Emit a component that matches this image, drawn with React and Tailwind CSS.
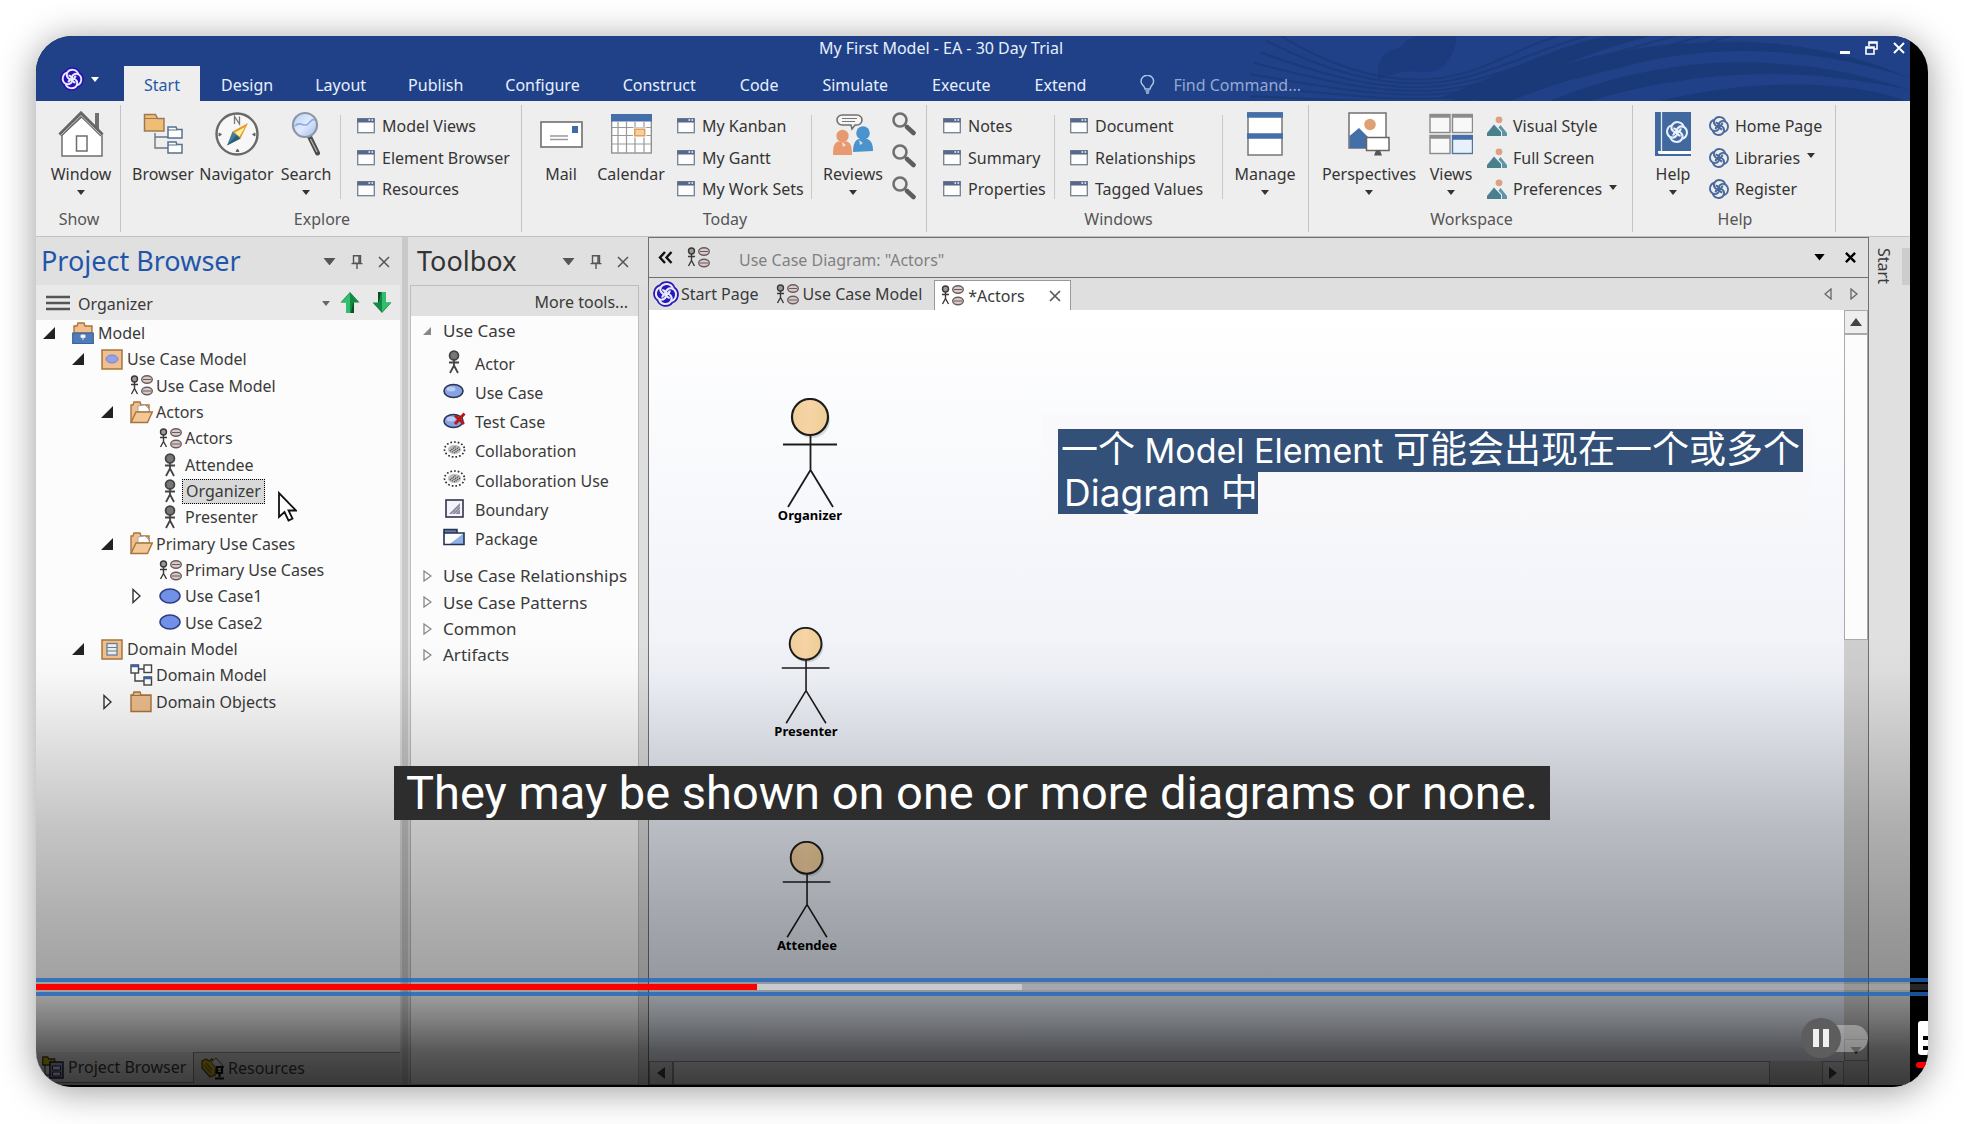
import React from "react";

/* ---------- shared glyphs ---------- */

function Knot({ size = 22, line = "#4b6ea0", halo = null, width = 2 }) {
  const rim = "M19.5 6.5A7.2 7.2 0 0117.5 19.5A7.2 7.2 0 014.500 17.500A7.2 7.2 0 016.500 4.500A7.2 7.2 0 0119.500 6.500z";
  return (
    <svg
      width={size}
      height={size}
      viewBox={halo ? "-2 -2 28 28" : "0 0 24 24"}
      fill="none"
      aria-hidden="true"
      className="shrink-0"
    >
      {halo && <path d={rim} fill={halo} stroke={halo} strokeWidth="6" strokeLinejoin="round" />}
      <path d={rim} stroke={line} strokeWidth={width} strokeLinejoin="round" />
      {[0, 90, 180, 270].map((t) => (
        <path
          key={t}
          d="M12 12C11 8 15 4.500 19.500 6.500M12 12C14.500 11.500 16 10 16.200 8"
          stroke={line}
          strokeWidth={width}
          transform={`rotate(${t} 12 12)`}
        />
      ))}
    </svg>
  );
}

function Caret({ size = 8, color = "#333" }) {
  return (
    <svg width={size} height={size / 2 + 1} viewBox="0 0 8 5" aria-hidden="true" className="shrink-0">
      <path d="M0 0h8L4 5z" fill={color} />
    </svg>
  );
}

function Cross({ size = 12, color = "#444", width = 2 }) {
  return (
    <svg width={size} height={size} viewBox="0 0 12 12" aria-hidden="true">
      <path d="M1 1l10 10M11 1L1 11" stroke={color} strokeWidth={width} />
    </svg>
  );
}

function Pin() {
  return (
    <svg width="12" height="14" viewBox="0 0 12 14" fill="none" stroke="#555" strokeWidth="1.4" aria-hidden="true">
      <path d="M2.5 .8h7v7.4h-7zM8 1v7M.5 8.6h11M6 9v5" />
    </svg>
  );
}

/* ---------- ribbon icons ---------- */

const PanelIcon = () => (
  <svg width="18" height="16" viewBox="0 0 18 16">
    <rect x=".7" y=".7" width="16.6" height="14" fill="#fdfdfe" stroke="#75818f" strokeWidth="1.3" />
    <rect x=".5" y=".5" width="17" height="4" fill="#56698c" />
    <path d="M11.5 2h1.6M14.5 2h1.6" stroke="#fff" strokeWidth="1.4" />
  </svg>
);

const SceneIcon = () => (
  <svg width="20" height="20" viewBox="0 0 20 20">
    <circle cx="12" cy="3.8" r="3.4" fill="#dca083" />
    <path d="M0 20v-3l7-8.5L14 16v4z" fill="#48808f" />
    <path d="M11.5 11.5l2-2.5L20 17v3h-5v-4.5z" fill="#5d97a5" />
  </svg>
);

const HelpKnot = () => <Knot size={20} line="#4a699b" width={2.2} />;

const HomeIcon = () => (
  <svg width="46" height="46" viewBox="0 0 46 46">
    <path d="M37 2h4v18l-4-4z" fill="#707070" />
    <path d="M4 24v21h40V24L23.500 6z" fill="#fff" stroke="#6e6e6e" strokeWidth="1.500" />
    <path d="M2 24L23 3l21 21" fill="none" stroke="#666" strokeWidth="4.500" />
    <path d="M2.500 24.500L23 4.500l20.500 20" fill="none" stroke="#c8c8c8" strokeWidth="1" />
    <rect x="18.500" y="25" width="10.500" height="15" fill="#fff" stroke="#6e6e6e" strokeWidth="1.500" />
  </svg>
);

const BrowserIcon = () => (
  <svg width="40" height="42" viewBox="0 0 40 42">
    <path d="M12 20v15h13M12 24h13" fill="none" stroke="#6b7680" strokeWidth="1.400" />
    <path d="M1.500 18V1.500h11l2 4h6.500V18z" fill="#f0bd74" stroke="#9a7b56" strokeWidth="1.500" />
    <path d="M1.500 5.500h13" stroke="#9a7b56" strokeWidth="1.200" />
    <path d="M25 25V14h8l1 2.500h5V25zM25 40V29h8l1 2.500h5V40z" fill="#fff" stroke="#56708f" strokeWidth="1.500" />
    <path d="M25 17h9M25 32h9" stroke="#56708f" strokeWidth="1.200" />
  </svg>
);

const CompassIcon = () => (
  <svg width="44" height="44" viewBox="0 0 44 44">
    <circle cx="22" cy="22" r="20.500" fill="#f7f7f7" stroke="#696969" strokeWidth="2.400" />
    <path d="M19.500 12V4.500l5 7.500V4.500" fill="none" stroke="#777" strokeWidth="1.300" />
    <path d="M4 21l2.500 1.500L4 24zM40 21l-2.500 1.500L40 24zM21 39.500l1.500-2.500 1.500 2.500z" fill="#666" stroke="#666" />
    <path d="M33 11L25.500 26.500 17.500 19.500z" fill="#e89a26" />
    <path d="M30 15l-5.500 9.500-4.500-4z" fill="#fff3a0" />
    <path d="M12 33.500l5.500-14 8 7z" fill="#3f7e97" />
    <path d="M12 33.500l9.500-10.500 4 3.500z" fill="#2d5f74" />
  </svg>
);

const LensIcon = () => (
  <svg width="30" height="46" viewBox="0 0 30 46">
    <defs>
      <linearGradient id="lens" x1="0" y1="0" x2="1" y2="1">
        <stop offset="0" stopColor="#b9cdf0" />
        <stop offset=".5" stopColor="#dfeaff" />
        <stop offset="1" stopColor="#a3bbe6" />
      </linearGradient>
    </defs>
    <path d="M18.500 25.500L26.500 42" stroke="#4c4c4c" strokeWidth="5" strokeLinecap="round" />
    <path d="M19.500 28L26 41" stroke="#b5b5b5" strokeWidth="1.300" />
    <circle cx="14" cy="14" r="12" fill="url(#lens)" stroke="#8d95a6" strokeWidth="2.200" />
    <path d="M4 15c5-6 9 2 13-2s4-5 7-4" stroke="#8ea9dc" strokeWidth="1.600" fill="none" />
  </svg>
);

const MailIcon = () => (
  <svg width="43" height="27" viewBox="0 0 43 27">
    <rect x="1" y="1" width="41" height="25" fill="#fff" stroke="#777" strokeWidth="1.700" />
    <rect x="32" y="5" width="6" height="7" fill="#3f6ca6" />
    <path d="M10 15h18M10 18.500h18" stroke="#9a9a9a" strokeWidth="1.300" />
  </svg>
);

const CalendarIcon = () => (
  <svg width="41" height="40" viewBox="0 0 41 40">
    <rect x=".7" y="1" width="39.600" height="38" fill="#fff" stroke="#8a8a8a" strokeWidth="1.300" />
    <rect width="41" height="7.500" fill="#446ea9" />
    <path d="M7 8v31M15.500 8v31M24 8v31M33 8v31M1 13.500h39M1 21.500h39M1 30h39" stroke="#999" strokeWidth="1.200" />
    <rect x="22" y="13.500" width="13.500" height="10" fill="#fff" />
    <rect x="23.700" y="15.200" width="10" height="6.600" fill="#f6cfa0" stroke="#dd9c55" strokeWidth="1.400" />
  </svg>
);

const ReviewsIcon = () => (
  <svg width="40" height="42" viewBox="0 0 40 42">
    <path d="M9 2h15a5 5 0 010 10h-2l-3 4-1-4H9A5 5 0 019 2z" fill="#f5f5f5" stroke="#707070" strokeWidth="1.600" />
    <path d="M9 5.500h15M9 8.500h13" stroke="#777" strokeWidth="1.200" />
    <circle cx="30" cy="20" r="6.800" fill="#4b93cc" />
    <path d="M20 39c0-8 2-12 6-13h8c4 1 6 5 6 12z" fill="#4b93cc" />
    <circle cx="9.500" cy="23" r="6.500" fill="#e79a70" stroke="#eee" strokeWidth=".6" />
    <path d="M0 42c0-8 1-12 5-13.500h9c4 1.500 5 5.500 5 13.500z" fill="#e79a70" />
    <path d="M9 29l4 3-3 2zM26 27l4 3-3 2z" fill="#fff" opacity=".7" />
  </svg>
);

const MagnifierIcon = () => (
  <svg width="24" height="24" viewBox="0 0 24 24">
    <circle cx="8" cy="8" r="6.500" fill="none" stroke="#707070" strokeWidth="2.600" />
    <path d="M12.500 12.500l3 3" stroke="#707070" strokeWidth="2" />
    <path d="M15 15l6.500 6" stroke="#5e5e5e" strokeWidth="4.500" strokeLinecap="round" />
  </svg>
);

const ManageIcon = () => (
  <svg width="36" height="44" viewBox="0 0 36 44">
    <rect x="1" y="1" width="34" height="42" fill="#fff" stroke="#777" strokeWidth="1.500" />
    <path d="M0 3h36M0 24h36" stroke="#446fa8" strokeWidth="5.500" />
  </svg>
);

const PerspectivesIcon = () => (
  <svg width="42" height="44" viewBox="0 0 42 44">
    <rect x="1" y="1" width="37" height="35" fill="#fff" stroke="#707070" strokeWidth="1.500" />
    <circle cx="22" cy="12.500" r="5.800" fill="#e0a076" />
    <path d="M1.500 36V24L11 16l12 12v8z" fill="#446fa8" />
    <rect x="18.500" y="25.500" width="22.500" height="13" fill="#fff" stroke="#666" strokeWidth="1.500" />
    <path d="M26 43.500l2-5h4l2 5z" fill="#555" />
  </svg>
);

const ViewsIcon = () => (
  <svg width="44" height="42" viewBox="0 0 44 42">
    <g fill="#f8f8f8" stroke="#8a8a8a" strokeWidth="1.400">
      <rect x="1" y="1.500" width="20" height="18" />
      <rect x="23.500" y="1.500" width="20" height="18" />
      <rect x="1" y="22.500" width="20" height="18" />
    </g>
    <path d="M1 3h20M23.500 3h20M1 24h20" stroke="#8c8c8c" strokeWidth="3.500" />
    <rect x="23.500" y="22.500" width="20" height="18" fill="#e8f0fb" stroke="#55759f" strokeWidth="1.400" />
    <path d="M23 24.500h21" stroke="#446fa8" strokeWidth="4.500" />
  </svg>
);

const HelpBookIcon = () => (
  <span className="relative block h-11 w-9">
    <svg width="36" height="44" viewBox="0 0 36 44">
      <rect width="36" height="44" fill="#41699f" />
      <path d="M6.500 0v40" stroke="#dfe7f2" strokeWidth="1.300" />
      <path d="M3 40.500h33" stroke="#fff" strokeWidth="3" />
      <path d="M3 41v3" stroke="#41699f" />
    </svg>
    <span className="absolute left-[11px] top-[9px]">
      <Knot size={22} line="#e9f1ff" width={2.2} />
    </span>
  </span>
);

/* ---------- tree and toolbox icons ---------- */

const DiagramIcon = () => (
  <svg width="23" height="21" viewBox="0 0 23 21" fill="none" stroke="#3d3838" strokeWidth="1.400">
    <circle cx="4.500" cy="4" r="3" fill="#999" />
    <path d="M4.500 7v7M1 9.500h7M4.500 13.500L1.500 19M4.500 13.500L7.500 19" />
    <g fill="#d9caca" stroke="#6a5c5c">
      <ellipse cx="17" cy="4.500" rx="5.300" ry="3.700" />
      <ellipse cx="17" cy="16" rx="5.300" ry="3.700" />
      <path d="M13 4.500h8M13 16h8" strokeWidth="1" />
    </g>
  </svg>
);

const ActorIcon = () => (
  <svg width="14" height="24" viewBox="0 0 14 24" fill="none" stroke="#444" strokeWidth="1.800">
    <circle cx="7" cy="5.500" r="4.400" fill="#777" />
    <path d="M7 10v6M2 12.500h10M7 15.500L3 23M7 15.500l4 7.500" />
  </svg>
);

const OvalIcon = () => (
  <svg width="22" height="17" viewBox="0 0 22 17">
    <ellipse cx="11" cy="8" rx="10" ry="7" fill="#7190e8" stroke="#2f3f80" strokeWidth="1.500" />
  </svg>
);

const RootIcon = () => (
  <svg width="22" height="23" viewBox="0 0 22 23">
    <path d="M2 11V4h3l1-3h6l1 3h7v7z" fill="#f0bf8b" stroke="#a8743c" strokeWidth="1.400" />
    <path d="M.7 11h20.600v10.500H.7z" fill="#4f7cb8" stroke="#3a62a0" strokeWidth="1.200" />
    <path d="M9 13h4v2.500H9zM10 17h2" fill="#fff" stroke="#dfe9f7" strokeWidth="1" />
  </svg>
);

const PackageUseIcon = () => (
  <svg width="22" height="21" viewBox="0 0 22 21">
    <rect x="1" y="1" width="20" height="19" fill="#efc08f" stroke="#a8743c" strokeWidth="1.500" />
    <ellipse cx="11" cy="10" rx="6" ry="4" fill="#94a0e8" stroke="#7a80d0" />
  </svg>
);

const PackageClassIcon = () => (
  <svg width="22" height="21" viewBox="0 0 22 21">
    <rect x="1" y="1" width="20" height="19" fill="#efc08f" stroke="#a8743c" strokeWidth="1.500" />
    <rect x="6" y="4.500" width="10" height="11.500" fill="#e8eef4" stroke="#6c7f92" strokeWidth="1.300" />
    <path d="M6 8.500h10M6 12h10" stroke="#6c7f92" strokeWidth="1.200" />
  </svg>
);

const OpenFolderIcon = () => (
  <svg width="23" height="23" viewBox="0 0 23 23">
    <path d="M1 21.500V4h2l1-3h6l1 3h8v8" fill="#efc08f" stroke="#a8743c" strokeWidth="1.400" />
    <path d="M8 11V5l7-1 4 4v3z" fill="#fff" stroke="#999" strokeWidth=".8" />
    <path d="M1 21.500L6 11h16.300L17.500 21.500z" fill="#f3c796" stroke="#a8743c" strokeWidth="1.400" />
  </svg>
);

const FolderIcon = () => (
  <svg width="22" height="22" viewBox="0 0 22 22">
    <path d="M1 20.500V4h2l1-3h6l1 3h10v16.500z" fill="#ecbe8e" stroke="#a8743c" strokeWidth="1.400" />
    <path d="M1 4.500h20" stroke="#a8743c" />
  </svg>
);

const ClassDiagramIcon = () => (
  <svg width="23" height="22" viewBox="0 0 23 22" fill="#fff" stroke="#444" strokeWidth="1.400">
    <path d="M9 5h5M5 9v8h9" fill="none" />
    <rect x="1" y="1" width="7.500" height="8" />
    <rect x="14" y="1" width="7.500" height="7.500" />
    <rect x="14" y="13" width="7.500" height="8" />
    <path d="M1 2h7.500M14 14h7.500" stroke="#3b62b8" strokeWidth="2.400" />
  </svg>
);

const ToolOval = ({ failed }) => (
  <svg width="23" height="17" viewBox="0 0 23 17">
    <ellipse cx="10.500" cy="9" rx="9.500" ry="6.500" fill="#87a4e2" stroke="#2c3554" strokeWidth="1.600" />
    <ellipse cx="8" cy="7" rx="4.500" ry="2.500" fill="#b9cdf6" />
    {failed && <path d="M12 3.500l9 8.500M21.500 1.500l-9.500 10.500" stroke="#bb1515" strokeWidth="2.800" />}
  </svg>
);

const CollabIcon = () => (
  <svg width="23" height="19" viewBox="0 0 23 19">
    <ellipse cx="11.500" cy="9.500" rx="10" ry="7.500" fill="none" stroke="#333" strokeWidth="1.700" strokeDasharray="1.700 2" />
    <ellipse cx="11.500" cy="9.500" rx="6.500" ry="4.500" fill="#bdbdbd" />
    <path d="M9 12l7-5M11 13l6-4M7 11l6-5" stroke="#444" strokeWidth="1.300" strokeDasharray="1 1" />
  </svg>
);

const BoundaryIcon = () => (
  <svg width="19" height="19" viewBox="0 0 19 19">
    <rect x="1" y="1" width="17" height="17" fill="#f4f4fa" stroke="#33334a" strokeWidth="1.600" />
    <path d="M4 15L15 4v11z" fill="#8e8ea0" />
    <path d="M7 15l8-8M10 15l5-5" stroke="#ddd" strokeDasharray="1 1" />
  </svg>
);

const ToolPackageIcon = () => (
  <svg width="22" height="18" viewBox="0 0 22 18">
    <path d="M1 5V1.500h13V5" fill="#5f78ad" stroke="#253250" strokeWidth="1.500" />
    <path d="M1 5h20v11.500H1z" fill="#fff" />
    <path d="M21 5v11.500H6z" fill="#8fb2e8" />
    <path d="M1 5h20v11.500H1z" fill="none" stroke="#253250" strokeWidth="1.600" />
  </svg>
);

/* ---------- ribbon ---------- */

function Big({ icon, label, width, menu }) {
  return (
    <button type="button" className={`${width} flex shrink-0 flex-col items-center pt-[5px] whitespace-nowrap`}>
      <span className="flex h-12 items-center justify-center">{icon}</span>
      <span className="mt-1 leading-6">{label}</span>
      {menu && (
        <span className="flex h-3 items-center">
          <Caret />
        </span>
      )}
    </button>
  );
}

function Stack({ items, Icon = PanelIcon, width = "" }) {
  return (
    <div className={`${width} flex shrink-0 flex-col pt-[5px]`}>
      {items.map(([label, menu]) => (
        <button key={label} type="button" className="flex h-8 items-center gap-1.5 text-left whitespace-nowrap">
          <span className="flex w-5 shrink-0 justify-center">
            <Icon />
          </span>
          <span>{label}</span>
          {menu && (
            <span className="ml-px pb-1">
              <Caret />
            </span>
          )}
        </button>
      ))}
    </div>
  );
}

const Rule = () => <div className="mt-[10px] h-[84px] w-px shrink-0 bg-[#c9c9c9]" />;

function Group({ label, width, children }) {
  return (
    <section aria-label={label} className={`${width} flex shrink-0 flex-col border-r border-[#c4c4c4]`}>
      <div className="flex h-[100px]">{children}</div>
      <div className="h-[27px] pt-px pl-0.5 text-center leading-[27px] text-[#555]">{label}</div>
    </section>
  );
}

function Ribbon() {
  return (
    <div className="flex overflow-hidden border-b border-[#c2c2c2] bg-[#eeeeee] py-1 text-base text-[#353535]">
      <Group label="Show" width="w-[85px]">
        <Big width="ml-2 w-[74px]" icon={<HomeIcon />} label="Window" menu />
      </Group>
      <Group label="Explore" width="w-[401px]">
        <Big width="ml-[5px] w-[74px]" icon={<BrowserIcon />} label="Browser" />
        <Big width="w-[73px]" icon={<CompassIcon />} label="Navigator" />
        <Big width="w-[66px]" icon={<LensIcon />} label="Search" menu />
        <div className="w-px shrink-0" />
        <Rule />
        <Stack width="ml-[15px]" items={[["Model Views"], ["Element Browser"], ["Resources"]]} />
      </Group>
      <Group label="Today" width="w-[405px]">
        <Big width="ml-1.5 w-[66px]" icon={<MailIcon />} label="Mail" />
        <Big width="w-[74px]" icon={<CalendarIcon />} label="Calendar" />
        <Stack width="ml-2 w-[135px]" items={[["My Kanban"], ["My Gantt"], ["My Work Sets"]]} />
        <Rule />
        <Big width="ml-1 w-[74px]" icon={<ReviewsIcon />} label="Reviews" menu />
        <div className="flex flex-col pt-[3px]">
          {["Find in diagram", "Find in model", "Find in files"].map((n) => (
            <button key={n} type="button" aria-label={n} className="flex h-8 w-7 items-center justify-center">
              <MagnifierIcon />
            </button>
          ))}
        </div>
      </Group>
      <Group label="Windows" width="w-[382px]">
        <Stack width="ml-[15px] w-[112px]" items={[["Notes"], ["Summary"], ["Properties"]]} />
        <Rule />
        <Stack width="ml-[14px] w-[153px]" items={[["Document"], ["Relationships"], ["Tagged Values"]]} />
        <Rule />
        <Big width="ml-[5px] w-[74px]" icon={<ManageIcon />} label="Manage" menu />
      </Group>
      <Group label="Workspace" width="w-[324px]">
        <Big width="ml-[9px] w-[102px]" icon={<PerspectivesIcon />} label="Perspectives" menu />
        <Big width="ml-1 w-[54px]" icon={<ViewsIcon />} label="Views" menu />
        <Stack width="ml-[9px]" Icon={SceneIcon} items={[["Visual Style"], ["Full Screen"], ["Preferences", true]]} />
      </Group>
      <Group label="Help" width="w-[203px]">
        <Big width="ml-[14px] w-[52px]" icon={<HelpBookIcon />} label="Help" menu />
        <Stack width="ml-[10px]" Icon={HelpKnot} items={[["Home Page"], ["Libraries", true], ["Register"]]} />
      </Group>
    </div>
  );
}

function TitleWaves() {
  const rising = [0, 1, 2, 3, 4, 5, 6];
  return (
    <svg
      className="absolute right-0 top-0 h-full w-[660px]"
      viewBox="0 0 660 65"
      preserveAspectRatio="none"
      fill="none"
      aria-hidden="true"
    >
      <path d="M128 44C126 24 134 14 150 12C156 2 170 -4 196 -4H206C208 16 196 40 168 36C150 34 140 40 128 44z" fill="#1c3b7e" />
      {rising.map((i) => (
        <path
          key={i}
          d={`M${22 - i * 6} ${-6 + i * 11}C70 ${26 + i * 6} 130 ${50 + i * 3} 190 ${42 + i * 4}S${280 + i * 22} ${-2 + i * 4} ${350 + i * 26} -8`}
          stroke="#193774"
          strokeWidth="2"
          opacity=".7"
        />
      ))}
      <g fill="#1a3979">
        <path d="M225 65C310 20 400 4 500 6C560 8 620 24 660 42C610 26 560 16 500 15C420 14 340 34 260 65z" />
        <path d="M300 65C380 32 460 22 530 28C580 30 630 44 660 54C610 44 570 38 520 38C450 38 390 50 340 65z" />
        <path d="M410 65C470 50 530 46 580 50C610 52 640 58 655 65z" />
        <path d="M190 62C270 30 320 4 370 -2H410C350 10 290 40 220 65z" />
      </g>
    </svg>
  );
}

const MENU = [
  ["Design", "px-[21px]"],
  ["Layout", "px-[21px]"],
  ["Publish", "px-[21px]"],
  ["Configure", "px-[21px]"],
  ["Construct", "px-[22px]"],
  ["Code", "px-[22px]"],
  ["Simulate", "px-[22px]"],
  ["Execute", "px-[22px]"],
  ["Extend", "px-[22px]"],
];

function TitleBar() {
  return (
    <header className="relative h-[65px] shrink-0 overflow-hidden bg-[#204187] text-base text-[#e6f0ff]">
      <TitleWaves />
      <div className="relative flex h-6 items-center">
        <h1 className="flex-1 pl-3 text-center">My First Model - EA - 30 Day Trial</h1>
        <div className="flex w-[76px] items-center gap-[15px] pl-1.5">
          <button type="button" aria-label="Minimize" className="flex h-3 w-[10px] items-end">
            <span className="h-[3px] w-full bg-white" />
          </button>
          <button type="button" aria-label="Restore">
            <svg width="13" height="14" viewBox="0 0 13 14" fill="none" stroke="#fff" strokeWidth="1.600">
              <path d="M4 5V1h8v7H9M4 2h8" />
              <path d="M1 6h8v7H1zM1 7h8" />
            </svg>
          </button>
          <button type="button" aria-label="Close">
            <Cross size={12} color="#fff" width={2} />
          </button>
        </div>
      </div>
      <nav className="relative flex h-[41px] items-end">
        <button type="button" aria-label="Application menu" className="flex h-10 w-[88px] items-center gap-[7px] pb-1 pl-6">
          <Knot size={24} line="#e8ecff" halo="#2a10b8" width={2.2} />
          <Caret color="#fff" />
        </button>
        <button type="button" className="h-[35px] w-[76px] bg-[#eeeeee] pt-0.5 text-center leading-8 text-[#1e5aa8]">
          Start
        </button>
        {MENU.map(([name, pad]) => (
          <button key={name} type="button" className={`${pad} h-[35px] pt-0.5 leading-8`}>
            {name}
          </button>
        ))}
        <label className="ml-8 flex h-[35px] items-center gap-[18px] pt-0.5">
          <svg width="15" height="19" viewBox="0 0 15 19" fill="none" stroke="#a9c3e6" strokeWidth="1.500">
            <path d="M5 14c0-3-4-4-4-7.500a6.300 6.300 0 0112.600 0C13.600 10 10 11 10 14zM5.500 16h4M6 18h3" />
          </svg>
          <input
            aria-label="Find Command"
            placeholder="Find Command..."
            className="w-[150px] bg-transparent leading-8 outline-none placeholder:text-[#93a9d2]"
          />
        </label>
      </nav>
    </header>
  );
}

/* ---------- dock panels ---------- */

function PanelHead({ title, tone }) {
  return (
    <div className={`${tone} flex h-12 shrink-0 items-center bg-[#e0e0e0]`}>
      <h2 className="flex-1 text-[27px] leading-10 whitespace-nowrap">{title}</h2>
      <div className="flex items-center gap-[15px] pt-px">
        <button type="button" aria-label={`${title} menu`}>
          <Caret size={13} color="#555" />
        </button>
        <button type="button" aria-label={`Pin ${title}`}>
          <Pin />
        </button>
        <button type="button" aria-label={`Close ${title}`}>
          <Cross size={12} color="#555" width={1.5} />
        </button>
      </div>
    </div>
  );
}

const TREE = [
  [0, "open", RootIcon, "Model"],
  [1, "open", PackageUseIcon, "Use Case Model"],
  [2, null, DiagramIcon, "Use Case Model"],
  [2, "open", OpenFolderIcon, "Actors"],
  [3, null, DiagramIcon, "Actors"],
  [3, null, ActorIcon, "Attendee"],
  [3, null, ActorIcon, "Organizer", true],
  [3, null, ActorIcon, "Presenter"],
  [2, "open", OpenFolderIcon, "Primary Use Cases"],
  [3, null, DiagramIcon, "Primary Use Cases"],
  [3, "shut", OvalIcon, "Use Case1"],
  [3, null, OvalIcon, "Use Case2"],
  [1, "open", PackageClassIcon, "Domain Model"],
  [2, null, ClassDiagramIcon, "Domain Model"],
  [2, "shut", FolderIcon, "Domain Objects"],
];

function Twist({ state }) {
  if (state === "open")
    return (
      <svg width="12" height="12" viewBox="0 0 12 12" aria-hidden="true">
        <path d="M12 0v12H0z" fill="#222" />
      </svg>
    );
  if (state === "shut")
    return (
      <svg width="11" height="16" viewBox="-2 0 11 16" aria-hidden="true">
        <path d="M1 1.500v13L8 8z" fill="#fff" stroke="#333" strokeWidth="1.400" />
      </svg>
    );
  return null;
}

function ArrowButton({ down }) {
  return (
    <button type="button" aria-label={down ? "Move down" : "Move up"}>
      <svg width="20" height="21" viewBox="0 0 20 21" className={down ? "rotate-180" : ""}>
        <path d="M10 0l9.500 10.500H14V21H6V10.500H.5z" fill="#128a44" />
        <path d="M10 1v20H6V10.500H1z" fill="#35bd6e" />
        <path d="M13 11h1v10h-3z" fill="#0a4d28" />
      </svg>
    </button>
  );
}

function Cursor() {
  return (
    <svg
      className="absolute left-full top-1/2 ml-[13px]"
      width="20"
      height="31"
      viewBox="0 0 20 31"
      aria-hidden="true"
    >
      <path d="M2 2v24l5.500-5 4 8.500 4-2-4-8H19z" fill="#fff" stroke="#111" strokeWidth="1.800" />
    </svg>
  );
}

function ProjectBrowser() {
  return (
    <section aria-label="Project Browser" className="flex w-[364px] shrink-0 flex-col">
      <PanelHead title="Project Browser" tone="pl-[5px] pr-[10px] text-[#1f56ac]" />
      <div className="flex h-[35px] shrink-0 items-center bg-[#e9e9e9] pl-[10px] pr-2">
        <svg width="24" height="16" viewBox="0 0 24 16" stroke="#555" strokeWidth="2.600" aria-hidden="true">
          <path d="M0 2h24M0 8h24M0 14h24" />
        </svg>
        <button type="button" className="ml-2 flex flex-1 items-center justify-between pt-0.5">
          <span>Organizer</span>
          <Caret color="#666" />
        </button>
        <div className="ml-2.5 flex gap-3">
          <ArrowButton />
          <ArrowButton down />
        </div>
      </div>
      <div className="min-h-0 flex-1 bg-[#fcfcfc]">
        <ul className="grid h-[395px] auto-rows-fr" role="tree">
          {TREE.map(([depth, state, Icon, label, selected], i) => (
            <li
              key={i}
              role="treeitem"
              aria-selected={!!selected}
              className="flex items-center whitespace-nowrap"
              style={{ paddingLeft: 7 + depth * 29 }}
            >
              <span className="flex w-7 shrink-0">
                <Twist state={state} />
              </span>
              <span className="flex w-6 shrink-0 justify-center">
                <Icon />
              </span>
              <span
                className={
                  selected
                    ? "relative border border-dotted border-black bg-[#d9d9d9] px-[3px] leading-[23px]"
                    : "px-[3px] leading-6"
                }
              >
                {label}
                {selected && <Cursor />}
              </span>
            </li>
          ))}
        </ul>
      </div>
      <div className="flex h-[33px] shrink-0 items-stretch bg-[#dadada]">
        <button
          type="button"
          className="mb-0.5 flex w-[158px] items-center gap-1 border-r border-b border-[#888] bg-[#eaeaea] pl-1.5 whitespace-nowrap"
        >
          <svg width="22" height="23" viewBox="0 0 22 23" className="shrink-0">
            <path d="M.7 9V1h5l1 2h6v6z" fill="#c9b31c" stroke="#4f4708" strokeWidth="1.300" />
            <path d="M3 9v10h5" fill="none" stroke="#222" />
            <rect x="8" y="6" width="13" height="16" fill="#a9a9cc" stroke="#222244" strokeWidth="1.500" />
            <path d="M10.500 10h8v4h-8zM10.500 16h8v4h-8z" fill="#e5e5ff" stroke="#222244" />
          </svg>
          Project Browser
        </button>
        <button
          type="button"
          className="flex flex-1 items-center gap-[3px] border-t border-[#999] pb-0.5 pl-[7px] whitespace-nowrap"
        >
          <svg width="24" height="23" viewBox="0 0 24 23" className="shrink-0">
            <path d="M1 4l4-2 3 2 3-2 4 6-1 10-5 2-8-9z" fill="#c7b021" stroke="#4f4708" strokeWidth="1.300" />
            <path d="M10 5l5-4 8 9-5 4z" fill="#ddd" stroke="#555" />
            <path d="M3 8l7 8M5 6l6 7" stroke="#7c6c0c" strokeWidth="1.200" />
            <path d="M16 10h5v6h-5zM18.500 16v4M14 21.500h9" fill="none" stroke="#111" strokeWidth="2.200" />
          </svg>
          Resources
        </button>
      </div>
    </section>
  );
}

const TOOLS = [
  ["Actor", ActorIcon],
  ["Use Case", ToolOval],
  ["Test Case", () => <ToolOval failed />],
  ["Collaboration", CollabIcon],
  ["Collaboration Use", CollabIcon],
  ["Boundary", BoundaryIcon],
  ["Package", ToolPackageIcon],
];

function Toolbox() {
  return (
    <section aria-label="Toolbox" className="flex w-[238px] shrink-0 flex-col bg-[#dedede]">
      <PanelHead title="Toolbox" tone="pl-[7px] pr-[19px] text-[#333]" />
      <div className="mr-[9px] flex min-h-0 flex-1 flex-col border border-[#bdbdbd] bg-[#fcfcfc]">
        <button type="button" className="h-[30px] shrink-0 bg-[#e0e0e0] pr-2.5 pt-0.5 text-right leading-[29px]">
          More tools...
        </button>
        <button type="button" className="flex h-[29px] items-center gap-3 pl-3 text-[17px]">
          <svg width="8" height="8" viewBox="0 0 8 8">
            <path d="M8 0v8H0z" fill="#888" />
          </svg>
          Use Case
        </button>
        <ul className="mt-1 grid h-[205px] shrink-0 auto-rows-fr">
          {TOOLS.map(([label, Icon]) => (
            <li key={label} className="flex">
              <button type="button" className="flex flex-1 items-center gap-[9px] pl-[31px]">
                <span className="flex w-6 justify-center pb-1">
                  <Icon />
                </span>
                {label}
              </button>
            </li>
          ))}
        </ul>
        <ul className="mt-[9px] grid h-[105px] shrink-0 auto-rows-fr overflow-hidden text-[17px]">
          {["Use Case Relationships", "Use Case Patterns", "Common", "Artifacts"].map((n) => (
            <li key={n} className="flex">
              <button type="button" className="flex items-center gap-[11px] pl-3 whitespace-nowrap">
                <svg width="9" height="12" viewBox="0 0 9 12" className="shrink-0">
                  <path d="M1 1v10l7-5z" fill="none" stroke="#888" strokeWidth="1.300" />
                </svg>
                {n}
              </button>
            </li>
          ))}
        </ul>
      </div>
    </section>
  );
}

/* ---------- diagram editor ---------- */

const ACTORS = [
  { name: "Organizer", x: 161, y: 88, height: 111 },
  { name: "Presenter", x: 157, y: 317, height: 98 },
  { name: "Attendee", x: 158, y: 531, height: 98 },
];

function StickActor({ name, x, y, height }) {
  return (
    <figure
      className="absolute flex w-24 -translate-x-1/2 flex-col items-center text-black"
      style={{ left: x, top: y }}
    >
      <svg height={height} viewBox="0 0 58 111" fill="none" stroke="#1c1c1c" strokeWidth="1.800">
        <defs>
          <linearGradient id="skin" x1="0" x2="1">
            <stop offset="0" stopColor="#efd09a" />
            <stop offset=".5" stopColor="#f8d3a6" />
            <stop offset="1" stopColor="#eccf94" />
          </linearGradient>
        </defs>
        <circle cx="31" cy="22" r="18" fill="#000" stroke="none" opacity=".13" />
        <circle cx="29" cy="19" r="18" fill="url(#skin)" strokeWidth="2.200" />
        <path d="M29.500 37v36M2 46.500h54M29.500 72L7 109M29.500 72L52 109" />
      </svg>
      <figcaption className="text-[13px] leading-[13px] font-bold">{name}</figcaption>
    </figure>
  );
}

function Editor() {
  const tab = "flex items-center whitespace-nowrap";
  return (
    <section
      aria-label="Diagram editor"
      className="flex min-w-0 flex-1 flex-col border-x border-t border-[#707070] bg-[#dfdfdf]"
    >
      <div className="flex h-10 shrink-0 items-center border-b border-[#707070] bg-[#e0e0e0] pl-[9px] pr-3">
        <button type="button" aria-label="Collapse">
          <svg width="15" height="13" viewBox="0 0 15 13" fill="none" stroke="#111" strokeWidth="2.400">
            <path d="M7 1L2 6.500 7 12M13.500 1l-5 5.500 5 5.500" />
          </svg>
        </button>
        <span className="ml-3.5">
          <DiagramIcon />
        </span>
        <span className="ml-[29px] flex-1 pt-1 text-[#808080]">Use Case Diagram: "Actors"</span>
        <button type="button" aria-label="Window list" className="mr-5">
          <Caret size={11} color="#000" />
        </button>
        <button type="button" aria-label="Close diagram">
          <Cross size={11} color="#000" width={2.6} />
        </button>
      </div>
      <div className="flex h-8 shrink-0 items-stretch pl-1 pr-[10px]">
        <button type="button" className={`${tab} gap-0.5`}>
          <Knot size={26} line="#e8ecff" halo="#2a18b8" width={2.2} />
          Start Page
        </button>
        <button type="button" className={`${tab} ml-[17px] gap-1`}>
          <DiagramIcon />
          Use Case Model
        </button>
        <div className={`${tab} mt-0.5 ml-3 w-[137px] border-x border-t border-[#999] bg-white pl-1.5`}>
          <DiagramIcon />
          <span className="ml-1 flex-1">*Actors</span>
          <button type="button" aria-label="Close Actors" className="mr-[9px]">
            <Cross size={12} color="#555" width={1.6} />
          </button>
        </div>
        <div className="ml-auto flex items-center gap-[18px]">
          {["Previous", "Next"].map((n) => (
            <button key={n} type="button" aria-label={n} className={n === "Next" ? "rotate-180" : ""}>
              <svg width="8" height="12" viewBox="0 0 8 12">
                <path d="M7 1v10L1 6z" fill="none" stroke="#666" strokeWidth="1.300" />
              </svg>
            </button>
          ))}
        </div>
      </div>

      <div className="flex min-h-0 flex-1">
        <div className="relative min-w-0 flex-1 overflow-hidden bg-gradient-to-b from-white via-[#f1f3f9] via-45% to-[#e8eef9]">
          {ACTORS.map((a) => (
            <StickActor key={a.name} {...a} />
          ))}
          <div className="absolute left-[393px] top-[105px] h-[110px] w-[769px] bg-[#f8f6f8]/60 px-4 py-3.5 font-['Inter','Noto_Sans_CJK_SC',sans-serif] text-[37px] text-white">
            <p className="flex flex-col items-start leading-[42px] whitespace-nowrap">
              <span className="h-[43px] bg-[#325078] px-[3px]">
                一个<span className="text-[34px]"> Model Element </span>可能会出现在一个或多个
              </span>
              <span className="h-[42px] bg-[#325078] pl-1.5">Diagram 中</span>
            </p>
          </div>
        </div>
        <div className="flex w-6 shrink-0 flex-col bg-[#cfcfcf]">
          <button
            type="button"
            aria-label="Scroll up"
            className="flex h-6 items-center justify-center border border-[#aaa] bg-[#eee]"
          >
            <Up />
          </button>
          <div className="h-[306px] border border-[#aaa] bg-[#fcfcfc]" />
          <button
            type="button"
            aria-label="Scroll down"
            className="mt-auto flex h-[22px] items-center justify-center border border-[#999] bg-[#ddd]"
          >
            <Caret size={12} color="#222" />
          </button>
        </div>
      </div>
      <div className="flex h-6 shrink-0 bg-[#cfcfcf] pr-6">
        <button
          type="button"
          aria-label="Scroll left"
          className="flex w-6 items-center justify-center border border-[#999] bg-[#ddd]"
        >
          <span className="-rotate-90">
            <Up />
          </span>
        </button>
        <div className="w-[1097px] border border-[#999] bg-[#ebebeb]" />
        <button
          type="button"
          aria-label="Scroll right"
          className="ml-auto flex w-[22px] items-center justify-center border border-[#999] bg-[#ddd]"
        >
          <span className="rotate-90">
            <Up />
          </span>
        </button>
      </div>
    </section>
  );
}

const Up = () => (
  <svg width="12" height="8" viewBox="0 0 12 8" aria-hidden="true">
    <path d="M6 0l6 8H0z" fill="#444" />
  </svg>
);

/* ---------- player overlay ---------- */

function PlayerOverlay() {
  return (
    <>
      <div className="pointer-events-none absolute inset-x-0 bottom-0 h-[450px] bg-[linear-gradient(to_bottom,rgba(0,0,0,0)_0%,rgba(0,0,0,0.02)_8%,rgba(0,0,0,0.10)_22%,rgba(0,0,0,0.22)_42%,rgba(0,0,0,0.32)_66%,rgba(0,0,0,0.37)_79%,rgba(0,0,0,0.49)_85%,rgba(0,0,0,0.65)_92%,rgba(0,0,0,0.75)_100%)]" />
      <div className="absolute inset-x-0 bottom-[267px] flex justify-center pr-5">
        <p className="h-[54px] bg-[#2d2d2d] px-3 font-['Roboto',sans-serif] text-[47px] leading-[54px] whitespace-nowrap text-white">
          They may be shown on one or more diagrams or none.
        </p>
      </div>
      <div className="absolute inset-x-0 bottom-[91px] h-[18px] border-y-4 border-[rgba(32,103,190,0.8)] py-0.5">
        <div className="flex h-1.5 bg-white/15">
          <div className="w-[38.1%] bg-[#ff0000]" />
          <div className="w-[14%] bg-white/40" />
        </div>
        <input
          type="range"
          aria-label="Seek"
          defaultValue={38}
          className="absolute inset-0 w-full cursor-pointer opacity-0"
        />
      </div>
      <label className="absolute right-[60px] bottom-[29px] flex h-10 w-[67px] items-center">
        <input type="checkbox" defaultChecked aria-label="Autoplay" className="peer sr-only" />
        <span className="ml-1.5 h-[27px] flex-1 rounded-full bg-white/35" />
        <span className="absolute left-0 flex size-10 items-center justify-center gap-1 rounded-full bg-[#5d5d5d]">
          <span className="h-[18px] w-1.5 bg-[#f0f0f0]" />
          <span className="h-[18px] w-1.5 bg-[#f0f0f0]" />
        </span>
      </label>
      <button type="button" aria-label="Subtitles" className="absolute right-0 bottom-[17px] h-[49px] w-3">
        <svg width="12" height="49" viewBox="0 0 12 49">
          <path d="M12 0H5a3 3 0 00-3 3v28a3 3 0 003 3h7z" fill="#fff" />
          <path d="M7 17h5M7 27h5" stroke="#000" strokeWidth="4" />
          <path d="M3 44h9" stroke="#f00" strokeWidth="6" strokeLinecap="round" />
        </svg>
      </button>
    </>
  );
}

export default function App() {
  return (
    <main className="flex min-h-screen bg-white px-9 pt-9 pb-[37px] font-['Noto_Sans',sans-serif] text-base text-[#3a3a3a]">
      <div className="relative flex min-w-0 flex-1 overflow-hidden rounded-[36px] bg-black pr-[18px] shadow-[0_4px_36px_rgba(0,0,0,0.4)]">
        <div className="flex min-w-0 flex-1 flex-col pb-0.5">
          <TitleBar />
          <Ribbon />
          <div className="flex min-h-0 flex-1 bg-[#e0e0e0]">
            <ProjectBrowser />
            <div className="w-[10px] shrink-0 border-x-2 border-[#e0e0e0] bg-[#c9c9c9]" />
            <Toolbox />
            <Editor />
            <aside className="flex w-[41px] shrink-0 items-start justify-between bg-[#e0e0e0] pt-[11px]">
              <button type="button" className="ml-[3px] leading-6 [writing-mode:vertical-rl]">
                Start
              </button>
              <div className="h-[37px] w-2 bg-[#cccccc]" />
            </aside>
          </div>
        </div>
        <PlayerOverlay />
      </div>
    </main>
  );
}
